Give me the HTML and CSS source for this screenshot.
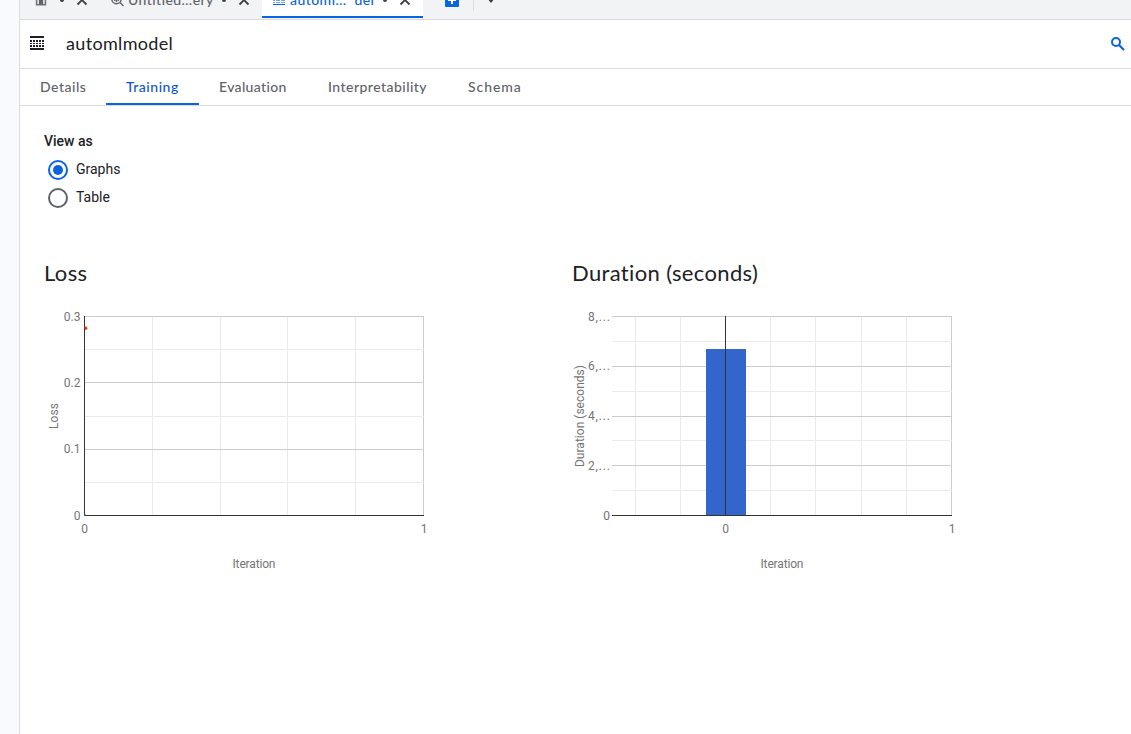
FILE: index.html
```html
<!DOCTYPE html>
<html lang="en">
<head>
<meta charset="utf-8">
<title>automlmodel</title>
<link rel="stylesheet" href="styles.css">
</head>
<body>
<div class="app">
  <aside class="rail"></aside>
  <main class="main">
    <div class="strip">
      <div class="filetabs">
        <div class="filetab filetab-home">
          <svg class="home" width="12" height="12" viewBox="0 0 12 12"><path d="M1.500 0v10.800h9V0" fill="#dadce0" stroke="#6f7377" stroke-width="1.400"/><path d="M4 10.500V5.500h4v5z" fill="#5f6368"/></svg>
          <i class="dot"></i>
          <svg class="close" width="12" height="12" viewBox="0 0 12 12"><path d="M1.500 1.500l9 9M10.500 1.500l-9 9" stroke="#3c4043" stroke-width="1.800"/></svg>
        </div>
        <div class="filetab filetab-query">
          <svg class="query" width="13" height="14" viewBox="0 0 13 14"><circle cx="5.500" cy="6" r="4.700" fill="none" stroke="#5f6368" stroke-width="1.500"/><path d="M9 9.500l3.500 3.500M3.700 5v3M5.500 3v6M7.400 5v3" stroke="#5f6368" stroke-width="1.400"/></svg>
          <span class="filename filename-query">Untitled…ery</span>
          <i class="dot"></i>
          <svg class="close" width="12" height="12" viewBox="0 0 12 12"><path d="M1.500 1.500l9 9M10.500 1.500l-9 9" stroke="#3c4043" stroke-width="1.800"/></svg>
        </div>
        <div class="filetab filetab-model">
          <svg class="model" width="12" height="12" viewBox="0 0 12 12" shape-rendering="crispEdges"><path d="M0 0h12v1H0zM0 11h12v1H0z" fill="#0b63e0"/><path d="M0 4.500h12M0 7.500h12M0 9.500h12" stroke="#6ea4ee" stroke-dasharray="2 .5"/><path d="M0 6.500h12" stroke="#0b63e0"/></svg>
          <span class="filename filename-model">automl…&nbsp; del</span>
          <i class="dot"></i>
          <svg class="close" width="12" height="12" viewBox="0 0 12 12"><path d="M1.500 1.500l9 9M10.500 1.500l-9 9" stroke="#3c4043" stroke-width="1.800"/></svg>
        </div>
        <svg class="add" width="14" height="14" viewBox="0 0 14 14"><rect width="14" height="14" rx="1" fill="#0b63e0"/><path d="M7 3v8M3 7h8" stroke="#fff" stroke-width="2"/></svg>
        <span class="divider"></span>
        <svg class="more" width="8" height="5" viewBox="0 0 8 5"><path d="M0 0h8L4 5z" fill="#3c4043"/></svg>
      </div>
    </div>
    <header class="header">
      <svg class="header-icon" width="14" height="14" viewBox="0 0 14 14" shape-rendering="crispEdges"><path d="M0 0h14v2H0zM0 12h14v2H0z" fill="#202124"/><path d="M0 4h2v2H0zM3 4h2v2H3zM6 4h2v2H6zM9 4h2v2H9zM12 4h2v2h-2zM0 7h2v1H0zM3 7h2v1H3zM6 7h2v1H6zM9 7h2v1H9zM12 7h2v1h-2zM0 9h2v2H0zM3 9h2v2H3zM6 9h2v2H6zM9 9h2v2H9zM12 9h2v2h-2z" fill="#202124"/></svg>
      <h1 class="title">automlmodel</h1>
      <svg class="search" width="14" height="14" viewBox="0 0 14 14"><circle cx="5" cy="5" r="4" fill="none" stroke="#0b63e0" stroke-width="2"/><path d="M8 8l5 5" stroke="#0b63e0" stroke-width="2.200"/></svg>
    </header>
    <nav class="tabs">
      <a class="tab tab-details">Details</a>
      <a class="tab tab-training">Training</a>
      <a class="tab tab-evaluation">Evaluation</a>
      <a class="tab tab-interpret">Interpretability</a>
      <a class="tab tab-schema">Schema</a>
    </nav>
    <section class="content">
      <div class="viewas">View as</div>
      <label class="option"><span class="radio radio-on"></span><span class="option-text">Graphs</span></label>
      <label class="option"><span class="radio"></span><span class="option-text">Table</span></label>
      <div class="charts">
        <div class="chart">
          <h2 class="chart-title">Loss</h2>
          <svg class="plot" width="400" height="280" viewBox="44 300 400 280">
            <g shape-rendering="crispEdges">
              <path class="minor" d="M152.500 316v199M220.500 316v199M287.500 316v199M355.500 316v199M85 349.500h339M85 416.500h339M85 482.500h339"/>
              <path class="major" d="M85 316.500h339M85 382.500h339M85 449.500h339M423.500 316v199"/>
              <path class="minor" d="M422 349.500h2M422 416.500h2M422 482.500h2"/>
              <path class="axis" d="M84.500 316v200M84 515.500h340"/>
            </g>
            <path d="M84.500 326.500h1a1.500 1.500 0 0 1 0 3.500h-1z" fill="#e2370f"/>
            <path d="M84 513.500a2 2 0 0 1 2 2h-2z" fill="#3366cc"/>
            <g class="ticks">
              <text x="80.500" y="321" text-anchor="end">0.3</text>
              <text x="80.500" y="387" text-anchor="end">0.2</text>
              <text x="80.500" y="453" text-anchor="end">0.1</text>
              <text x="80.500" y="520" text-anchor="end">0</text>
              <text x="84.500" y="533" text-anchor="middle">0</text>
              <text x="424" y="533" text-anchor="middle">1</text>
              <text x="232.500" y="568" textLength="43">Iteration</text>
              <text transform="translate(58 429) rotate(-90)" textLength="26">Loss</text>
            </g>
          </svg>
        </div>
        <div class="chart">
          <h2 class="chart-title">Duration (seconds)</h2>
          <svg class="plot" width="400" height="280" viewBox="572 300 400 280">
            <g shape-rendering="crispEdges">
              <path class="minor" d="M635.500 316v199M680.500 316v199M770.500 316v199M815.500 316v199M861.500 316v199M906.500 316v199M612 341.500h340M612 391.500h340M612 440.500h340M612 490.500h340"/>
              <path class="major" d="M612 316.500h340M612 366.500h340M612 416.500h340M612 465.500h340M951.500 316v199"/>
              <path class="minor" d="M950 341.500h2M950 391.500h2M950 440.500h2M950 490.500h2"/>
              <rect x="706" y="349" width="40" height="166" fill="#3366cc"/>
              <path class="axis" d="M725.500 316v200M612 515.500h340"/>
            </g>
            <g class="ticks">
              <text x="588" y="321" textLength="22">8,...</text>
              <text x="588" y="370" textLength="22">6,...</text>
              <text x="588" y="420" textLength="22">4,...</text>
              <text x="588" y="470" textLength="22">2,...</text>
              <text x="610" y="520" text-anchor="end">0</text>
              <text x="725.500" y="533" text-anchor="middle">0</text>
              <text x="952" y="533" text-anchor="middle">1</text>
              <text x="760.500" y="568" textLength="43">Iteration</text>
              <text transform="translate(584 467) rotate(-90)" textLength="102">Duration (seconds)</text>
            </g>
          </svg>
        </div>
      </div>
    </section>
  </main>
</div>
</body>
</html>
```

FILE: styles.css
```css
* { box-sizing: border-box; }
body { margin: 0; background: #fff; color: #202124; font-family: Roboto, "Liberation Sans", sans-serif; }
.app { display: flex; height: 734px; overflow: hidden; }
.rail { width: 20px; flex: none; background: #f8fafd; border-right: 1px solid #dadce0; }
.main { flex: 1; min-width: 0; }
.strip { height: 20px; overflow: hidden; background: #f1f3f4; border-bottom: 1px solid #dadce0; }
.filetabs { display: flex; align-items: center; height: 36px; margin-top: -18px; }
.filetab { display: flex; align-items: center; height: 36px; }
.filetab-home { width: 80px; padding-left: 15px; }
.filetab-query { width: 162px; padding-left: 11px; }
.filetab-model { width: 161px; padding-left: 11px; background: #fff; border-bottom: 2px solid #0b63e0; padding-top: 2px; }
.dot { width: 4px; height: 3px; border-radius: 0 0 2px 2px; background: #3c4043; }
.filetab-home .dot { margin: 0 12px 0 13px; }
.filetab-query .dot { margin: 0 12px 0 8px; }
.filetab-model .dot { margin: 0 12px 0 7px; }
.model { margin-top: -2px; }
.filename { font: 500 14px/20px Lato, sans-serif; letter-spacing: .45px; color: #5f6368; white-space: nowrap; flex: none; }
.filename-query { margin-left: 4px; width: 86px; }
.filename-model { margin-left: 5px; width: 86px; color: #0b63e0; }
.add { margin-left: 22px; }
.divider { width: 1px; height: 28px; margin: 0 13px 6px 14px; background: #dadce0; }
.header { display: flex; align-items: center; height: 49px; padding: 0 6px 2px 10px; border-bottom: 1px solid #dadce0; }
.search { margin-top: 2px; }
.title { flex: 1; margin: 0 0 0 22px; font: 400 18px/24px Lato, sans-serif; letter-spacing: .33px; }
.tabs { display: flex; height: 37px; border-bottom: 1px solid #dadce0; }
.tab { height: 36px; padding-left: 20px; font: 500 14px/36px Lato, sans-serif; letter-spacing: .52px; color: #5f6368; white-space: nowrap; }
.tab-details { width: 86px; }
.tab-training { width: 93px; color: #0b57d0; border-bottom: 2px solid #0b63e0; }
.tab-evaluation { width: 109px; letter-spacing: .35px; }
.tab-interpret { width: 140px; letter-spacing: .46px; }
.tab-schema { width: 94px; letter-spacing: .95px; }
.content { padding: 26px 24px 0; }
.viewas { height: 24px; font: 500 14px/19px Roboto, sans-serif; }
.option { display: flex; align-items: center; gap: 8px; height: 28px; padding-left: 4px; font-size: 14px; }
.option-text { margin-top: -2px; }
.radio { display: flex; width: 20px; height: 20px; border: 2px solid #5f6368; border-radius: 50%; align-items: center; justify-content: center; }
.radio-on { border-color: #0b63e0; }
.radio-on::after { content: ""; width: 10px; height: 10px; border-radius: 50%; background: #0b63e0; }
.charts { display: flex; gap: 128px; margin-top: 47px; }
.chart { width: 400px; }
.chart-title { margin: 0; height: 41px; font: 400 22px/28px Lato, sans-serif; letter-spacing: .35px; white-space: nowrap; }
.plot { display: block; overflow: visible; }
.minor { stroke: #ebebeb; fill: none; }
.major { stroke: #ccc; fill: none; }
.axis { stroke: #333; fill: none; }
.ticks { font: 12px Roboto, sans-serif; fill: #757575; }
```
